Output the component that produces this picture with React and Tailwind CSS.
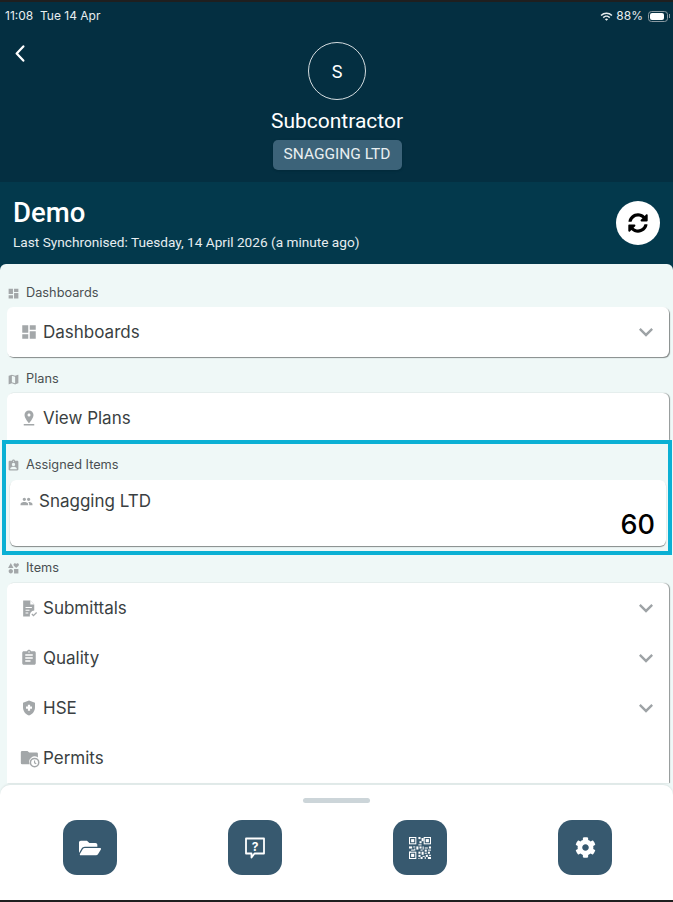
import { FaFolderOpen, FaCog, FaSyncAlt } from 'react-icons/fa'
import {
  MdDashboard,
  MdMap,
  MdAssignmentInd,
  MdPeople,
  MdPinDrop,
  MdAssignment,
  MdHealthAndSafety,
  MdInterests,
  MdExpandMore,
  MdWifi,
} from 'react-icons/md'

const ICON_GREY = 'text-[#a3a7a9]'

// document with a small tick at the corner
function SubmittalIcon() {
  return (
    <svg viewBox="0 0 24 24" className={`h-[19px] w-[19px] ${ICON_GREY}`} fill="currentColor">
      <path d="M4 2h9l5 5v7.5a6 6 0 0 0-5.5 7.5H4z" />
      <path d="M13 2v5h5z" fill="#fff" />
      <path d="M7 10h8v1.4H7zM7 13.5h5v1.4H7zM7 17h3.5v1.4H7z" fill="#fff" />
      <path d="M15 19l2 2 4-4" fill="none" stroke="currentColor" strokeWidth="1.6" />
    </svg>
  )
}

// folder with a clock badge
function PermitIcon() {
  return (
    <svg viewBox="0 0 24 24" className={`h-[20px] w-[20px] ${ICON_GREY}`} fill="currentColor">
      <path d="M1 5a1.5 1.5 0 0 1 1.5-1.5H9l2 2h9A1.5 1.5 0 0 1 21.5 7v4.5a6.5 6.5 0 0 0-9.8 8H2.5A1.5 1.5 0 0 1 1 18z" />
      <circle cx="17.5" cy="17.5" r="5" fill="none" stroke="currentColor" strokeWidth="1.8" />
      <path d="M17.5 15v2.8l2 1.2" fill="none" stroke="currentColor" strokeWidth="1.3" />
    </svg>
  )
}

// square speech bubble with a question mark
function HelpIcon() {
  return (
    <svg viewBox="0 0 22 24" className="h-[24px] w-[22px]" fill="none">
      <path d="M2 2.5h18v15H10.5L7.5 21.5v-4H2z" stroke="#fff" strokeWidth="1.8" strokeLinejoin="round" />
      <text x="11" y="14.5" textAnchor="middle" fill="#fff" fontSize="12" fontWeight="700" fontFamily="Inter, sans-serif">?</text>
    </svg>
  )
}

// QR code: three finder squares and a patch of modules
function QrIcon() {
  const modules = [
    [9, 0, 2, 2], [12, 1, 2, 3], [10, 4, 2, 2], [9, 7, 3, 1], [0, 9, 3, 2], [4, 9, 2, 1], [7, 9, 2, 3],
    [2, 12, 3, 1], [5, 11, 1, 2], [0, 14, 2, 1], [10, 9, 2, 2], [13, 9, 1, 3], [15, 10, 3, 1], [19, 9, 2, 2],
    [11, 12, 2, 1], [15, 12, 2, 2], [18, 12, 3, 1], [9, 14, 2, 2], [12, 14, 2, 3], [18, 14, 2, 2],
    [15, 15, 2, 1], [9, 17, 2, 2], [13, 18, 2, 1], [16, 17, 2, 2], [19, 17, 2, 1], [11, 19, 2, 2],
    [15, 19, 1, 2], [18, 19, 3, 2], [9, 20, 1, 1],
  ]
  return (
    <svg viewBox="0 0 21 21" className="h-[22px] w-[22px]" fill="#fff">
      {[[0, 0], [14, 0], [0, 14]].map(([x, y]) => (
        <g key={`${x}-${y}`}>
          <rect x={x + 0.5} y={y + 0.5} width="6" height="6" fill="none" stroke="#fff" />
          <rect x={x + 2} y={y + 2} width="3" height="3" />
        </g>
      ))}
      {modules.map(([x, y, w, h]) => (
        <rect key={`${x}-${y}`} x={x} y={y} width={w} height={h} />
      ))}
    </svg>
  )
}

function SectionLabel({ icon: Icon, children }) {
  return (
    <div className="flex h-[20px] items-center text-[12.75px] text-[#4a4f52]">
      <span className="flex w-[25px] justify-start pl-[6px]">
        <Icon className={`h-[13px] w-[13px] ${ICON_GREY}`} />
      </span>
      {children}
    </div>
  )
}

function MenuRow({ icon, label, chevron }) {
  return (
    <div className="flex h-[50px] items-center pl-[13px] pr-[9px]">
      <span className="flex w-[23px] items-center">{icon}</span>
      <span className="flex-1 pt-[2px] text-[17px] text-[#3a3f42]">{label}</span>
      {chevron && <MdExpandMore className="h-[28px] w-[28px] text-[#9ea3a6]" />}
    </div>
  )
}

function ToolButton({ children }) {
  return (
    <button className="flex h-[55px] w-[54px] items-center justify-center rounded-[14px] bg-[#37596f] text-white">
      {children}
    </button>
  )
}

export default function App() {
  return (
    <div className="flex h-[902px] w-[673px] flex-col overflow-hidden bg-[#03394c] font-['Inter',sans-serif]">
      <div className="h-[2px] shrink-0 bg-[#1f1f1f]" />

      {/* header */}
      <div className="relative flex h-[180px] shrink-0 flex-col items-center bg-[#042f41] pl-[1px] text-white">
        <div className="absolute inset-x-0 top-[5px] flex items-center justify-between pl-[5px] pr-[3px] text-[12px] text-[#e8eef0]">
          <span>11:08 &nbsp;Tue 14 Apr</span>
          <span className="flex items-center gap-[3px]">
            <MdWifi className="h-[13px] w-[13px]" />
            88%
            <span className="ml-[2px] flex h-[11px] w-[20px] items-center rounded-[3.5px] border border-[#8b9aa2] p-[1px]">
              <span className="h-full w-[86%] rounded-[2px] bg-white" />
            </span>
            <span className="-ml-[2px] h-[4px] w-[1px] bg-[#8b9aa2]" />
          </span>
        </div>
        <svg viewBox="0 0 10 18" className="absolute left-[15px] top-[43px] h-[17px] w-[10px]" fill="none">
          <path d="M8.5 1.5L1.5 9l7 7.5" stroke="#fff" strokeWidth="2.4" strokeLinecap="round" strokeLinejoin="round" />
        </svg>
        <div className="mt-[40px] flex h-[58px] w-[58px] items-center justify-center rounded-full border border-[#d5dde0] font-['Roboto',sans-serif] text-[18px]">
          S
        </div>
        <div className="mt-[7px] font-['Roboto',sans-serif] text-[21px] leading-[28px]">Subcontractor</div>
        <div className="mt-[5px] flex h-[30px] w-[129px] items-center justify-center rounded-[5px] bg-[#3c6379] font-['Roboto',sans-serif] text-[15.5px] text-[#e8eef0] shadow-sm">
          SNAGGING LTD
        </div>
      </div>

      {/* project strip */}
      <div className="flex h-[82px] shrink-0 items-start justify-between bg-[#03394c] pl-[13px] pr-[13px] text-white">
        <div className="font-['Roboto',sans-serif]">
          <div className="mt-[15px] text-[27.5px] font-medium leading-[32px]">Demo</div>
          <div className="mt-[4px] text-[13.65px] leading-[18px] text-[#e6edf0]">
            Last Synchronised: Tuesday, 14 April 2026 (a minute ago)
          </div>
        </div>
        <div className="mt-[19px] flex h-[44px] w-[44px] items-center justify-center rounded-full bg-white text-black">
          <FaSyncAlt className="h-[20px] w-[20px]" />
        </div>
      </div>

      {/* scrolling menu */}
      <div className="relative min-h-0 flex-1 overflow-hidden rounded-t-[6px] bg-[#eff8f7] pl-[1px]">
        <div className="pt-[19px]">
          <SectionLabel icon={MdDashboard}>Dashboards</SectionLabel>
          <div className="ml-[6px] mr-[4px] mt-[4px] rounded-[6px] bg-white shadow-[1px_1px_1px_rgba(0,0,0,0.45)]">
            <MenuRow icon={<MdDashboard className={`h-[18px] w-[18px] ${ICON_GREY}`} />} label="Dashboards" chevron />
          </div>

          <div className="mt-[12px]">
            <SectionLabel icon={MdMap}>Plans</SectionLabel>
          </div>
          <div className="ml-[6px] mr-[4px] mt-[4px] h-[47px] rounded-t-[6px] bg-white shadow-[1px_0_1px_rgba(0,0,0,0.4)]">
            <MenuRow icon={<MdPinDrop className={`h-[18px] w-[18px] ${ICON_GREY}`} />} label="View Plans" />
          </div>

          {/* highlighted section */}
          <div className="relative mx-[1px] h-[115px] border-[4px] border-[#0bb0d4] pt-[11px]">
            <div className="-ml-[5px]">
              <SectionLabel icon={MdAssignmentInd}>Assigned Items</SectionLabel>
            </div>
            <div className="ml-[4px] mr-[2px] mt-[5px] h-[66px] rounded-[6px] bg-white pl-[10px] pr-[11px] pt-[9px] shadow-[0_1px_1px_rgba(0,0,0,0.45)]">
              <div className="flex items-center text-[17px] leading-[24px] text-[#3a3f42]">
                <MdPeople className={`mr-[6px] h-[13px] w-[13px] ${ICON_GREY}`} />
                Snagging LTD
              </div>
              <div className="-mt-[4px] text-right text-[27px] font-medium leading-[32px] text-black">60</div>
            </div>
          </div>

          <div className="mt-[3px]">
            <SectionLabel icon={MdInterests}>Items</SectionLabel>
          </div>
          <div className="ml-[6px] mr-[4px] mt-[5px] rounded-t-[6px] bg-white shadow-[1px_0_1px_rgba(0,0,0,0.4)]">
            <MenuRow icon={<SubmittalIcon />} label="Submittals" chevron />
            <MenuRow icon={<MdAssignment className={`h-[18px] w-[18px] ${ICON_GREY}`} />} label="Quality" chevron />
            <MenuRow icon={<MdHealthAndSafety className={`h-[18px] w-[18px] ${ICON_GREY}`} />} label="HSE" chevron />
            <MenuRow icon={<PermitIcon />} label="Permits" />
          </div>
        </div>
      </div>

      {/* bottom sheet */}
      <div className="z-10 -mt-[117px] h-[115px] shrink-0 rounded-t-[10px] bg-white shadow-[0_-1px_2px_rgba(0,0,0,0.08)]">
        <div className="mx-auto mt-[13px] h-[5px] w-[67px] rounded-full bg-[#ccd5d9]" />
        <div className="mt-[17px] grid grid-cols-4 justify-items-center pl-[7px] pr-[5px]">
          <ToolButton><FaFolderOpen className="h-[22px] w-[22px]" /></ToolButton>
          <ToolButton><HelpIcon /></ToolButton>
          <ToolButton><QrIcon /></ToolButton>
          <ToolButton><FaCog className="h-[21px] w-[21px]" /></ToolButton>
        </div>
      </div>
      <div className="z-10 h-[2px] shrink-0 bg-[#1f1f1f]" />
    </div>
  )
}
